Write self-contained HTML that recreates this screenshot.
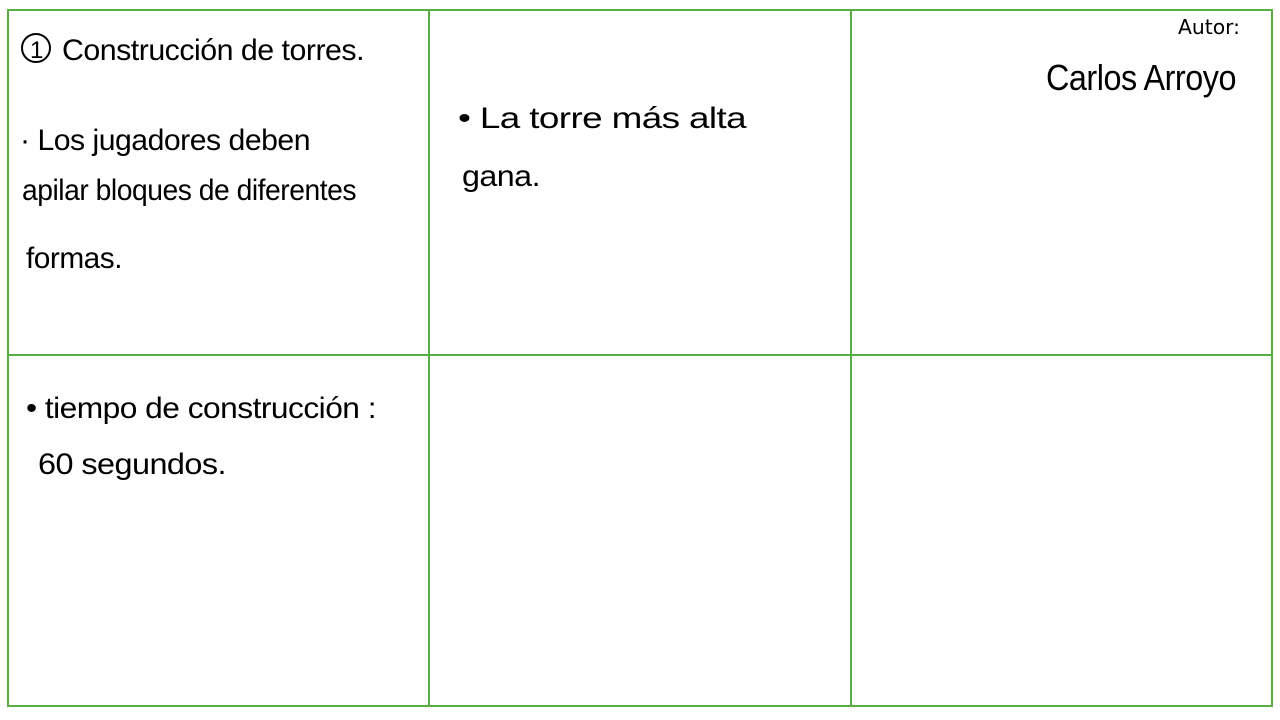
<!DOCTYPE html>
<html><head><meta charset="utf-8"><style>
html,body{margin:0;padding:0;background:#fff;width:1280px;height:720px;overflow:hidden}
svg{display:block}
text{font-family:"Liberation Sans","DejaVu Sans",sans-serif;fill:#000}
.h{font-size:30px;font-weight:normal;letter-spacing:-0.5px}
</style></head><body>
<svg width="1280" height="720" viewBox="0 0 1280 720">
<g fill="none" stroke="#5aac44" stroke-width="2">
<rect x="8" y="10" width="1264" height="696"/>
<line x1="429" y1="10" x2="429" y2="706"/>
<line x1="851" y1="10" x2="851" y2="706"/>
<line x1="8" y1="355" x2="1272" y2="355"/>
</g>
<circle cx="36" cy="48" r="14" fill="none" stroke="#000" stroke-width="2"/>
<text x="30" y="58" style="font-size:24px">1</text>
<text class="h" x="62" y="60" textLength="302" lengthAdjust="spacingAndGlyphs">Construcción de torres.</text>
<text class="h" x="20" y="150" textLength="290" lengthAdjust="spacingAndGlyphs">· Los jugadores deben</text>
<text class="h" x="22" y="200" textLength="334" lengthAdjust="spacingAndGlyphs">apilar bloques de diferentes</text>
<text class="h" x="26" y="268" textLength="96" lengthAdjust="spacingAndGlyphs">formas.</text>
<text class="h" x="458" y="128" textLength="288" lengthAdjust="spacingAndGlyphs">• La torre más alta</text>
<text class="h" x="462" y="186" textLength="78" lengthAdjust="spacingAndGlyphs">gana.</text>
<text x="1178" y="34" style="font-size:20px;font-family:'DejaVu Sans',sans-serif" textLength="62" lengthAdjust="spacingAndGlyphs">Autor:</text>
<text class="h" x="1046" y="90" style="font-size:36px" textLength="190" lengthAdjust="spacingAndGlyphs">Carlos Arroyo</text>
<text class="h" x="26" y="418" textLength="350" lengthAdjust="spacingAndGlyphs">• tiempo de construcción :</text>
<text class="h" x="38" y="474" textLength="188" lengthAdjust="spacingAndGlyphs">60 segundos.</text>
</svg>
</body></html>
